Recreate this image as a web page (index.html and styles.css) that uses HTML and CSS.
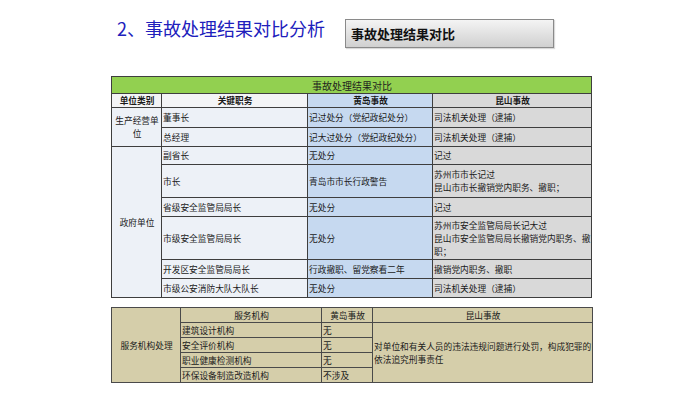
FILE: index.html
```html
<!DOCTYPE html>
<html lang="zh">
<head>
<meta charset="utf-8">
<link rel="stylesheet" href="styles.css">
</head>
<body>
<div class="page">
  <header class="head">
    <h1 class="title">2、事故处理结果对比分析</h1>
    <div class="tag">事故处理结果对比</div>
  </header>

  <table class="cmp">
    <colgroup>
      <col class="c1"><col class="c2"><col class="c3"><col class="c4">
    </colgroup>
    <tr class="r-cap"><td colspan="4" class="cap">事故处理结果对比</td></tr>
    <tr class="r-head">
      <th class="h-l">单位类别</th>
      <th class="h-l">关键职务</th>
      <th class="h-hd">黄岛事故</th>
      <th class="h-ks">昆山事故</th>
    </tr>
    <tr class="r20">
      <td rowspan="2" class="cat">生产经营单<br>位</td>
      <td class="pos">董事长</td>
      <td class="hd">记过处分（党纪政纪处分）</td>
      <td class="ks">司法机关处理（逮捕）</td>
    </tr>
    <tr class="r19">
      <td class="pos">总经理</td>
      <td class="hd">记大过处分（党纪政纪处分）</td>
      <td class="ks">司法机关处理（逮捕）</td>
    </tr>
    <tr class="r18">
      <td rowspan="6" class="cat">政府单位</td>
      <td class="pos">副省长</td>
      <td class="hd">无处分</td>
      <td class="ks">记过</td>
    </tr>
    <tr class="r33">
      <td class="pos">市长</td>
      <td class="hd">青岛市市长行政警告</td>
      <td class="ks ml">苏州市市长记过<br>昆山市市长撤销党内职务、撤职；</td>
    </tr>
    <tr class="r19">
      <td class="pos">省级安全监管局局长</td>
      <td class="hd">无处分</td>
      <td class="ks">记过</td>
    </tr>
    <tr class="r43">
      <td class="pos">市级安全监管局局长</td>
      <td class="hd">无处分</td>
      <td class="ks ml">苏州市安全监管局局长记大过<br>昆山市安全监管局局长撤销党内职务、撤<br>职；</td>
    </tr>
    <tr class="r19">
      <td class="pos">开发区安全监管局局长</td>
      <td class="hd">行政撤职、留党察看二年</td>
      <td class="ks">撤销党内职务、撤职</td>
    </tr>
    <tr class="r19">
      <td class="pos">市级公安消防大队大队长</td>
      <td class="hd">无处分</td>
      <td class="ks">司法机关处理（逮捕）</td>
    </tr>
  </table>

  <table class="svc">
    <colgroup>
      <col class="s1"><col class="s2"><col class="s3"><col class="s4">
    </colgroup>
    <tr class="s-head">
      <td rowspan="5" class="s-cat">服务机构处理</td>
      <td class="center">服务机构</td>
      <td class="center">黄岛事故</td>
      <td class="center">昆山事故</td>
    </tr>
    <tr class="s-row">
      <td>建筑设计机构</td>
      <td>无</td>
      <td rowspan="4" class="s-note">对单位和有关人员的违法违规问题进行处罚，构成犯罪的<br>依法追究刑事责任</td>
    </tr>
    <tr class="s-row">
      <td>安全评价机构</td>
      <td>无</td>
    </tr>
    <tr class="s-row">
      <td>职业健康检测机构</td>
      <td>无</td>
    </tr>
    <tr class="s-row">
      <td>环保设备制造改造机构</td>
      <td>不涉及</td>
    </tr>
  </table>
</div>
</body>
</html>
```

FILE: styles.css
```css
html, body {
  margin: 0;
  padding: 0;
  background: #ffffff;
}

body {
  font-family: "Noto Sans CJK SC", "Noto Sans", "DejaVu Sans", sans-serif;
  color: #1a1a1a;
}

.page {
  width: 700px;
  height: 393px;
  overflow: hidden;
}

.head {
  display: flex;
  align-items: flex-start;
  padding: 17px 0 0 117px;
  height: 76px;
  box-sizing: border-box;
}

.title {
  margin: 0;
  font-size: 18px;
  line-height: 22px;
  font-weight: 400;
  color: #2020bc;
  letter-spacing: 0;
}

.tag {
  margin: 2px 0 0 20px;
  width: 209px;
  height: 29px;
  box-sizing: border-box;
  border: 1px solid #8a8a8a;
  background: linear-gradient(#f4f4f4, #d0d0d0);
  font-size: 13px;
  font-weight: 700;
  line-height: 27px;
  padding-left: 5px;
  color: #111;
  box-shadow: 1px 1px 1px rgba(0,0,0,0.15);
}

table {
  border-collapse: collapse;
  table-layout: fixed;
  margin-left: 111px;
}

td, th {
  padding: 0 0 0 1px;
  font-size: 8.7px;
  line-height: 11px;
  vertical-align: middle;
  white-space: nowrap;
  overflow: hidden;
}

/* main comparison table */
.cmp {
  width: 480px;
  border: 1px solid #3a3a3a;
}

.cmp td, .cmp th {
  border: 1px solid #3e3e3e;
}

.c1 { width: 50px; }
.c2 { width: 146px; }
.c3 { width: 125px; }
.c4 { width: 159px; }

.cap {
  background: #92d050;
  text-align: center;
  font-size: 10px;
  color: #1e1e1e;
}

.r-cap { height: 17px; }
.r-head { height: 14px; }
.r18 { height: 18px; }
.r19 { height: 19px; }
.r20 { height: 20px; }
.r33 { height: 33px; }
.r43 { height: 43px; }

th {
  font-weight: 700;
  text-align: center;
}

.h-l { background: #f3f4f6; }
.h-hd { background: #c6d9f0; }
.h-ks { background: #d9d9d9; }

.cat {
  background: #edf1f7;
  text-align: center;
  white-space: normal;
  line-height: 13px;
}

.pos { background: #edf1f7; }
.hd { background: #c6d9f0; }
.ks { background: #d9d9d9; }

.ml {
  line-height: 13px;
  white-space: nowrap;
}

/* service table */
.svc {
  width: 481px;
  margin-top: 9px;
  border: 1px solid #4a4a4a;
  background: #d5ceaa;
}

.svc td {
  border: 1px solid #4a4a4a;
  font-size: 8.7px;
}

.s1 { width: 69px; }
.s2 { width: 141px; }
.s3 { width: 51px; }
.s4 { width: 220px; }

.s-head { height: 15px; }
.s-row { height: 15px; }

.center { text-align: center; }

.s-cat {
  text-align: center;
  font-size: 9px;
}

.s-note {
  line-height: 13px;
  vertical-align: middle;
}
```
